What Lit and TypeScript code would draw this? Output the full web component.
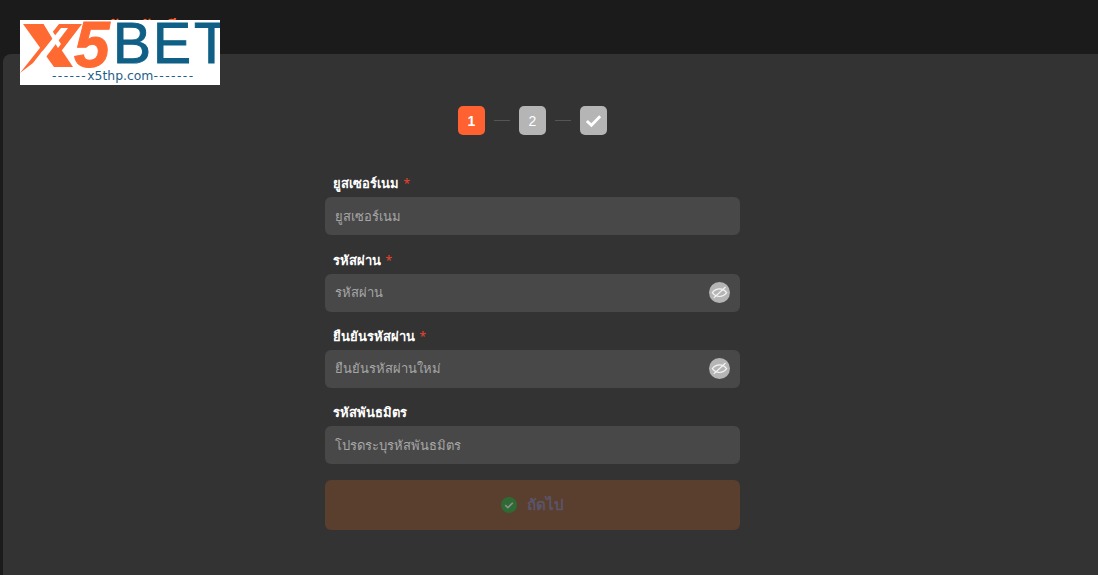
import { LitElement, html, css } from "lit";
import { customElement } from "lit/decorators.js";

const eyeOff = html`<svg class="eye" viewBox="0 0 22 22" width="21" height="21" aria-hidden="true">
  <circle cx="11" cy="11" r="11" fill="#b5b5b5"/>
  <path d="M3.500 11.200c2-2.700 4.500-4 7.500-4s5.500 1.300 7.500 4c-2 2.700-4.500 4-7.500 4s-5.500-1.300-7.500-4z" fill="none" stroke="#f4f4f4" stroke-width="1.200"/>
  <path d="M17.300 5.300 5 16.600" stroke="#f4f4f4" stroke-width="1.300" fill="none"/>
</svg>`;

@customElement("app-root")
export class AppRoot extends LitElement {
  static styles = css`
    :host {
      display: block;
      width: 1098px;
      height: 575px;
      overflow: hidden;
      position: relative;
      background: #1b1b1b;
      font-family: Tahoma, "Noto Sans", "DejaVu Sans", sans-serif;
      color: #fff;
    }
    .page { display: flex; flex-direction: column; height: 100%; }
    .header { height: 54px; flex: none; }
    .hidden-title {
      position: absolute; left: 95px; top: 13px;
      font-size: 17.500px; line-height: 26px; font-weight: 700; color: #ff5f2e;
      white-space: nowrap;
    }
    .logo {
      position: absolute; left: 20px; top: 20px;
      width: 200px; height: 65px; background: #fff; overflow: hidden;
    }
    .logo svg { display: block; }
    .panel {
      flex: 1; margin-left: 3px; background: #333333;
      border-top-left-radius: 8px;
      display: flex; flex-direction: column; align-items: center;
      padding: 52px 36px 0 0; box-sizing: border-box;
    }
    .steps { display: flex; align-items: center; height: 29px; }
    .step {
      width: 27px; height: 29px; border-radius: 5px; background: #b5b5b5;
      display: flex; align-items: center; justify-content: center;
      font-family: "Liberation Sans", Arial, sans-serif;
      font-size: 14px; font-weight: 400; color: #fff;
    }
    .step.active { background: #ff6230; font-weight: 700; }
    .dash { width: 16px; height: 1px; background: #555; margin: 0 9px; }
    .form { width: 415px; margin-top: 37.200px; display: flex; flex-direction: column; }
    .field { display: flex; flex-direction: column; margin-bottom: 13.330px; }
    .label {
      padding-left: 8px; height: 25px; line-height: 22px;
      font-size: 13px; font-weight: 700; color: #fff;
    }
    .req { color: #e8452c; font-weight: 400; font-size: 12px; margin-left: 1px; }
    .input {
      height: 38px; border-radius: 6px; background: #484848;
      display: flex; align-items: center; justify-content: space-between;
      padding: 0 10px; box-sizing: border-box;
      font-size: 13px; color: #a6a6a6;
    }
    .eye { display: block; }
    .submit {
      height: 50px; margin-top: 2.670px; border-radius: 6px; background: #5a3e2e;
      display: flex; align-items: center; justify-content: center; gap: 10px;
      font-size: 15px; font-weight: 700; color: #5a5468;
    }
    .submit svg { display: block; }
    .mark-5 { font: italic 700 64px "Liberation Sans", Arial, sans-serif; fill: #ff6a33; stroke: #ff6a33; stroke-width: 1px; }
    .mark-bet { font: 400 57px "Liberation Sans", Arial, sans-serif; fill: #0f5f86; stroke: #0f5f86; stroke-width: 1px; }
    .mark-url { font: 400 12.400px "DejaVu Sans", sans-serif; fill: #1f5f8a; }
    .mark-dash { letter-spacing: 1.400px; }
  `;

  private field(label: string, placeholder: string, required: boolean, eye: boolean) {
    return html`<div class="field">
      <div class="label">${label}${required ? html` <span class="req">*</span>` : ""}</div>
      <div class="input"><span>${placeholder}</span>${eye ? eyeOff : ""}</div>
    </div>`;
  }

  render() {
    return html`
      <div class="page">
        <div class="header"></div>
        <div class="panel">
          <div class="steps">
            <div class="step active">1</div>
            <div class="dash"></div>
            <div class="step">2</div>
            <div class="dash"></div>
            <div class="step">
              <svg viewBox="0 0 20 20" width="19" height="19" aria-hidden="true">
                <path d="M3 10.500l4.800 4.500L17 5.500" fill="none" stroke="#fff" stroke-width="3"/>
              </svg>
            </div>
          </div>
          <div class="form">
            ${this.field("ยูสเซอร์เนม", "ยูสเซอร์เนม", true, false)}
            ${this.field("รหัสผ่าน", "รหัสผ่าน", true, true)}
            ${this.field("ยืนยันรหัสผ่าน", "ยืนยันรหัสผ่านใหม่", true, true)}
            ${this.field("รหัสพันธมิตร", "โปรดระบุรหัสพันธมิตร", false, false)}
            <div class="submit">
              <svg viewBox="0 0 16 16" width="16" height="16" aria-hidden="true">
                <circle cx="8" cy="8" r="8" fill="#2f6a35"/>
                <path d="M4.200 8.200l2.600 2.500 5-5" fill="none" stroke="#8a8f8c" stroke-width="1.600"/>
              </svg>
              <span>ถัดไป</span>
            </div>
          </div>
        </div>
        <div class="hidden-title">สมัครบัญชี</div>
        <div class="logo">
          <svg viewBox="0 0 200 65" width="200" height="65" role="img" aria-label="X5BET">
            <polygon points="3,4 24,4 53,47 34,47" fill="#ff6a33"/>
            <polygon points="0,53 39,4 62,4 36,38 27,25 13,43" fill="#ff6a33"/>
            <polygon points="23,3 27,3 41,24 38,28" fill="#fff"/>
            <polygon points="41,8 48,8 26,37 21,33" fill="#fff"/>
            <text class="mark-5" x="54" y="47">5</text>
            <text class="mark-bet" x="93 133 174" y="43">BET</text>
            <text class="mark-url" x="32" y="60"><tspan class="mark-dash">------</tspan>x5thp.com<tspan class="mark-dash">-------</tspan></text>
          </svg>
        </div>
      </div>
    `;
  }
}
